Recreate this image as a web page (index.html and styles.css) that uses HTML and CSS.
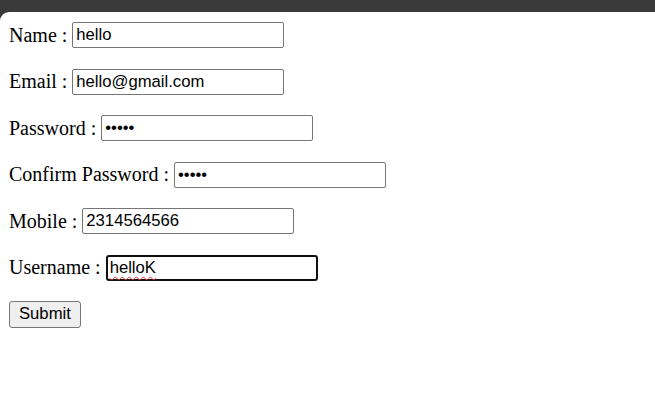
FILE: index.html
```html
<!DOCTYPE html>
<html>
<head>
<meta charset="utf-8">
<link rel="stylesheet" href="styles.css">
</head>
<body>
<div class="page">
  <form class="form">
    <div class="row"><label>Name : </label><input class="field" type="text" value="hello"></div>
    <div class="row"><label>Email : </label><input class="field" type="text" value="hello@gmail.com"></div>
    <div class="row"><label>Password : </label><input class="field" type="password" value="hello"></div>
    <div class="row"><label>Confirm Password : </label><input class="field" type="password" value="hello"></div>
    <div class="row"><label>Mobile : </label><input class="field" type="text" value="2314564566"></div>
    <div class="row"><label>Username : </label><span class="wrap"><input class="field focused" type="text" value="helloK"><span class="squiggle">helloK</span></span></div>
    <div class="row"><button class="submit" type="button">Submit</button></div>
  </form>
</div>
</body>
</html>
```
FILE: styles.css
```css
html, body {
  margin: 0;
  padding: 0;
  background: #3a3a3a;
  height: 100%;
}
.page {
  margin-top: 12px;
  background: #ffffff;
  border-top-left-radius: 9px;
  min-height: 405px;
  box-sizing: border-box;
  padding: 10px 9px;
  font-family: "Liberation Serif", "Times New Roman", serif;
  font-size: 20px;
  color: #000;
}
.form {
  display: flex;
  flex-direction: column;
  gap: 20.5px;
  margin: 0;
}
.row {
  display: flex;
  align-items: center;
  height: 26px;
  white-space: pre;
}
.wrap {
  position: relative;
  display: inline-block;
  height: 26px;
}
.field {
  box-sizing: border-box;
  width: 212px;
  height: 26px;
  margin: 0;
  padding: 0 3px;
  border: 1px solid #767676;
  border-radius: 2px;
  font-family: "Liberation Sans", Arial, sans-serif;
  font-size: 16.67px;
  color: #000;
  background: #fff;
  outline: none;
}
.field.focused {
  border: 2px solid #101010;
  border-radius: 3px;
  padding: 0 2px;
}
.squiggle {
  position: absolute;
  left: 4px;
  top: 4px;
  font-family: "Liberation Sans", Arial, sans-serif;
  font-size: 16.67px;
  color: transparent;
  text-decoration: underline wavy #e8312f;
  text-decoration-thickness: 1px;
  text-underline-offset: 3px;
  pointer-events: none;
  line-height: 18px;
}
.submit {
  box-sizing: border-box;
  height: 27px;
  padding: 0 9px;
  margin: 0;
  background: #efefef;
  border: 1px solid #767676;
  border-radius: 3px;
  font-family: "Liberation Sans", Arial, sans-serif;
  font-size: 16.67px;
  color: #000;
}
```
